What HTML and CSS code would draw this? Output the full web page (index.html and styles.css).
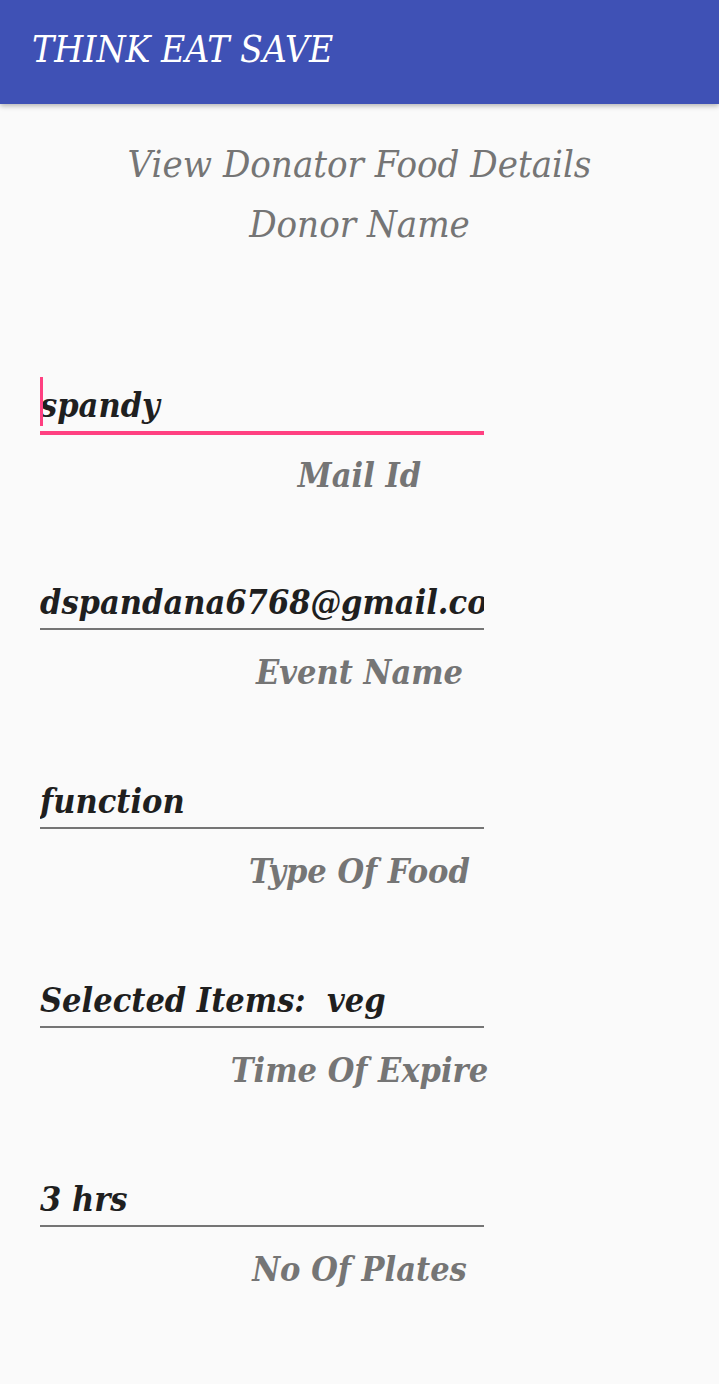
FILE: index.html
```html
<!DOCTYPE html>
<html>
<head>
<meta charset="utf-8">
<link rel="stylesheet" href="styles.css">
</head>
<body>
<header class="appbar"><span class="appbar-title">THINK EAT SAVE</span></header>
<main class="content">
  <h1 class="heading">View Donator Food Details</h1>
  <h2 class="heading heading-sub">Donor Name</h2>
  <div class="field field-focused"><span class="cursor"></span><span class="value">spandy</span></div>
  <div class="label label-first">Mail Id</div>
  <div class="field"><span class="value">dspandana6768@gmail.com</span></div>
  <div class="label">Event Name</div>
  <div class="field"><span class="value">function</span></div>
  <div class="label">Type Of Food</div>
  <div class="field"><span class="value">Selected Items:&nbsp; veg</span></div>
  <div class="label">Time Of Expire</div>
  <div class="field"><span class="value">3 hrs</span></div>
  <div class="label">No Of Plates</div>
</main>
</body>
</html>
```
FILE: styles.css
```css
html, body {
  margin: 0;
  padding: 0;
  background: #fafafa;
  width: 719px;
  height: 1384px;
  overflow: hidden;
}
body {
  font-family: "DejaVu Serif", "Liberation Serif", serif;
  font-style: italic;
}
.appbar {
  height: 104px;
  background: #3f51b5;
  box-shadow: 0 2px 5px rgba(0,0,0,0.28);
  display: flex;
  align-items: center;
  padding-left: 32px;
  position: relative;
}
.appbar-title {
  color: #fff;
  font-size: 37px;
  font-stretch: condensed;
  font-weight: 400;
  margin-top: -6px;
}
.content {
  display: flex;
  flex-direction: column;
}
.heading {
  margin: 0;
  text-align: center;
  font-size: 38px;
  font-stretch: condensed;
  font-weight: 400;
  color: #757575;
  line-height: 60px;
}
.heading:first-child { margin-top: 30px; }
.field {
  margin-left: 40px;
  width: 444px;
  height: 60px;
  border-bottom: 2px solid #757575;
  display: flex;
  align-items: flex-end;
  position: relative;
  overflow: hidden;
  white-space: nowrap;
}
.field-focused {
  margin-top: 117px;
  border-bottom: 4px solid #ff4081;
}
.cursor {
  position: absolute;
  left: 0;
  top: 6px;
  width: 3px;
  height: 49px;
  background: #ff4081;
}
.value {
  font-size: 34px;
  font-stretch: condensed;
  font-weight: 700;
  color: #1f1f1f;
  line-height: 44px;
  padding-bottom: 4px;
}
.label {
  text-align: center;
  font-size: 34px;
  font-stretch: condensed;
  font-weight: 700;
  color: #757575;
  line-height: 60px;
  margin-top: 12px;
  margin-bottom: 65px;
}
.label-first {
  margin-top: 10px;
  margin-bottom: 63px;
}
```
